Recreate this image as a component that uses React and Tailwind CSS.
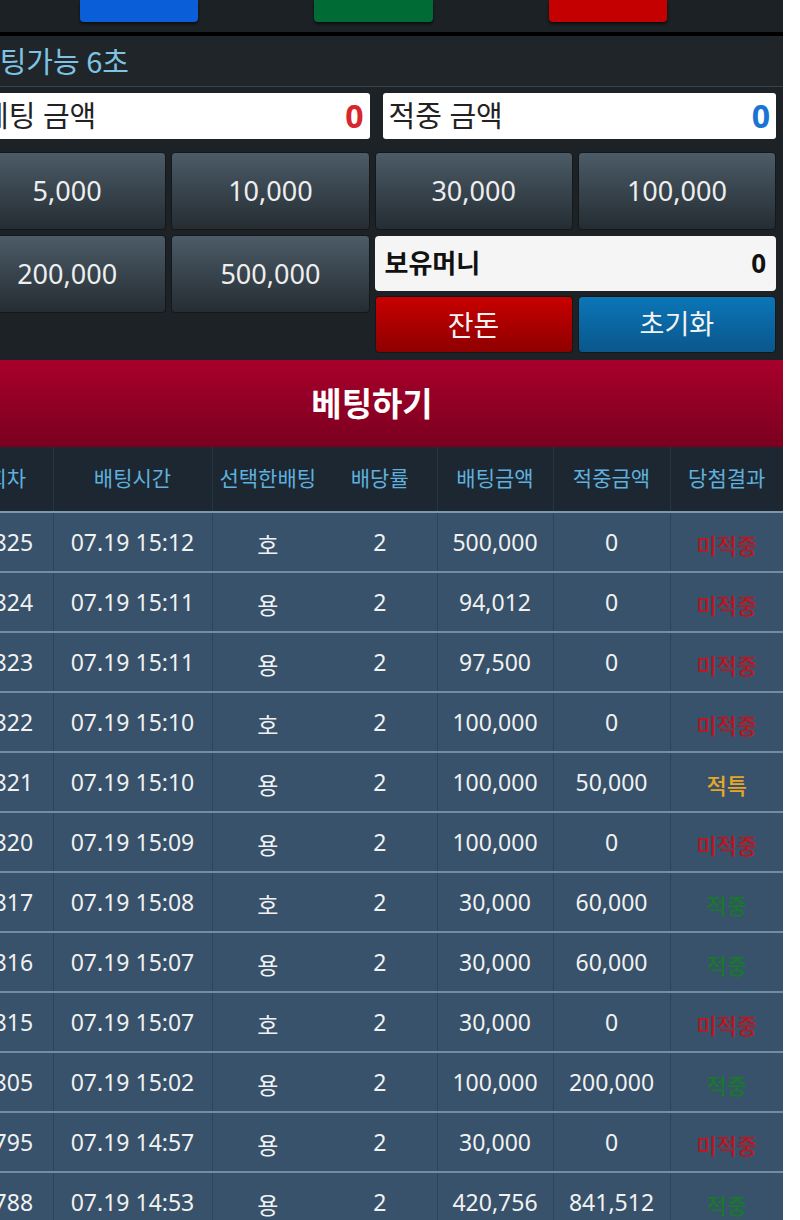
import React from "react";

const FONT = { fontFamily: '"Noto Sans", "Noto Sans CJK KR", sans-serif' };
const KR = { fontFamily: '"Noto Sans CJK KR", "Noto Sans", sans-serif' };

const ROWS = [
  ["1825", "07.19 15:12", "호", "500,000", "0", "미적중"],
  ["1824", "07.19 15:11", "용", "94,012", "0", "미적중"],
  ["1823", "07.19 15:11", "용", "97,500", "0", "미적중"],
  ["1822", "07.19 15:10", "호", "100,000", "0", "미적중"],
  ["1821", "07.19 15:10", "용", "100,000", "50,000", "적특"],
  ["1820", "07.19 15:09", "용", "100,000", "0", "미적중"],
  ["1817", "07.19 15:08", "호", "30,000", "60,000", "적중"],
  ["1816", "07.19 15:07", "용", "30,000", "60,000", "적중"],
  ["1815", "07.19 15:07", "호", "30,000", "0", "미적중"],
  ["1805", "07.19 15:02", "용", "100,000", "200,000", "적중"],
  ["1795", "07.19 14:57", "용", "30,000", "0", "미적중"],
  ["1788", "07.19 14:53", "용", "420,756", "841,512", "적중"],
];

const resultColor = {
  미적중: "text-[#bd1420]",
  적중: "text-[#18782b]",
  적특: "text-[#e8a626]",
};

function ChipButton({ label }) {
  return (
    <button className="h-[78px] rounded-[4px] border border-[#14181b] bg-gradient-to-b from-[#4c5c68] to-[#252d33] text-[27px] text-[#eeeeee]">
      {label}
    </button>
  );
}

export default function App() {
  return (
    <div className="w-[800px] h-[1220px] overflow-hidden bg-white" style={FONT}>
      <div className="w-[822px] -ml-[39px] bg-[#1d2226]">
        {/* top colour buttons */}
        <div className="h-[32px] bg-[#1c2125] flex pl-[119px] gap-[116px]">
          <div className="w-[118px] h-[22px] rounded-b-[4px] bg-[#0a5fd8] shadow-[0_2px_3px_rgba(0,0,0,0.6)]" />
          <div className="w-[119px] h-[22px] rounded-b-[4px] bg-[#006b35] shadow-[0_2px_3px_rgba(0,0,0,0.6)]" />
          <div className="w-[118px] h-[22px] rounded-b-[4px] bg-[#c40000] shadow-[0_2px_3px_rgba(0,0,0,0.6)]" />
        </div>
        <div className="h-[4px] bg-black" />

        {/* timer */}
        <div className="h-[51px] bg-[#1f2529] border-b border-[#3a4347] flex items-center pl-[12px] text-[29px] text-[#7ec3e3]" style={KR}>
          베팅가능 6초
        </div>

        {/* amount boxes */}
        <div className="grid grid-cols-2 gap-[13px] pl-[15px] pr-[7px] pt-[6px]">
          <div className="h-[46px] rounded-[3px] bg-white flex items-center justify-between px-[6px]">
            <span className="text-[29px] text-[#222]">베팅 금액</span>
            <span className="text-[32px] font-bold text-[#d8262c]">0</span>
          </div>
          <div className="h-[46px] rounded-[3px] bg-white flex items-center justify-between px-[6px]">
            <span className="text-[29px] text-[#222]">적중 금액</span>
            <span className="text-[32px] font-bold text-[#1a74d2]">0</span>
          </div>
        </div>

        {/* chips */}
        <div className="grid grid-cols-2 gap-[5px] px-[7px] pt-[13px] pb-[7px]">
          <div className="grid grid-cols-2 gap-[5px] content-start">
            <ChipButton label="5,000" />
            <ChipButton label="10,000" />
            <ChipButton label="200,000" />
            <ChipButton label="500,000" />
          </div>
          <div className="flex flex-col">
            <div className="grid grid-cols-2 gap-[5px]">
              <ChipButton label="30,000" />
              <ChipButton label="100,000" />
            </div>
            <div className="mt-[6px] h-[55px] rounded-[4px] bg-[#f5f5f5] flex items-center justify-between px-[10px]">
              <span className="text-[26px] font-bold text-[#111]">보유머니</span>
              <span className="text-[26px] font-bold text-[#111]">0</span>
            </div>
            <div className="mt-[5px] grid grid-cols-2 gap-[5px]">
              <button className="h-[57px] rounded-[4px] border border-[#14181b] bg-gradient-to-b from-[#c80000] to-[#8e0000] text-[28px] text-[#f3f3f3]">
                잔돈
              </button>
              <button className="h-[57px] rounded-[4px] border border-[#14181b] bg-gradient-to-b from-[#0b76b8] to-[#0a578c] text-[27px] text-[#f3f3f3]">
                초기화
              </button>
            </div>
          </div>
        </div>

        {/* bet button */}
        <div className="h-[87px] bg-gradient-to-b from-[#a9002b] to-[#7a001f] flex items-center justify-center text-[33px] font-bold text-white">
          베팅하기
        </div>

        {/* table */}
        <table className="w-[822px] table-fixed border-collapse">
          <colgroup>
            <col className="w-[92px]" />
            <col className="w-[159px]" />
            <col className="w-[111px]" />
            <col className="w-[114px]" />
            <col className="w-[116px]" />
            <col className="w-[117px]" />
            <col className="w-[113px]" />
          </colgroup>
          <thead>
            <tr className="h-[65px] bg-[#1c2731] text-[21px] text-[#5fb0de] border-b-2 border-[#7f97aa]">
              <th className="font-normal border-r border-[#263542]">회차</th>
              <th className="font-normal border-r border-[#263542]">배팅시간</th>
              <th className="font-normal">선택한배팅</th>
              <th className="font-normal border-r border-[#263542]">배당률</th>
              <th className="font-normal border-r border-[#263542]">배팅금액</th>
              <th className="font-normal border-r border-[#263542]">적중금액</th>
              <th className="font-normal">당첨결과</th>
            </tr>
          </thead>
          <tbody>
            {ROWS.map((r) => (
              <tr
                key={r[0]}
                className="h-[60px] bg-[#37526a] text-[23px] text-[#f1f1f1] text-center border-b-2 border-[#6f8ea6]"
              >
                <td className="border-r border-[#2c4558]">{r[0]}</td>
                <td className="border-r border-[#2c4558]">{r[1]}</td>
                <td className="pt-[6px]">{r[2]}</td>
                <td className="border-r border-[#2c4558]">2</td>
                <td className="border-r border-[#2c4558]">{r[3]}</td>
                <td className="border-r border-[#2c4558]">{r[4]}</td>
                <td className={`pt-[6px] text-[22px] font-medium ${resultColor[r[5]]}`}>{r[5]}</td>
              </tr>
            ))}
          </tbody>
        </table>
      </div>
    </div>
  );
}
